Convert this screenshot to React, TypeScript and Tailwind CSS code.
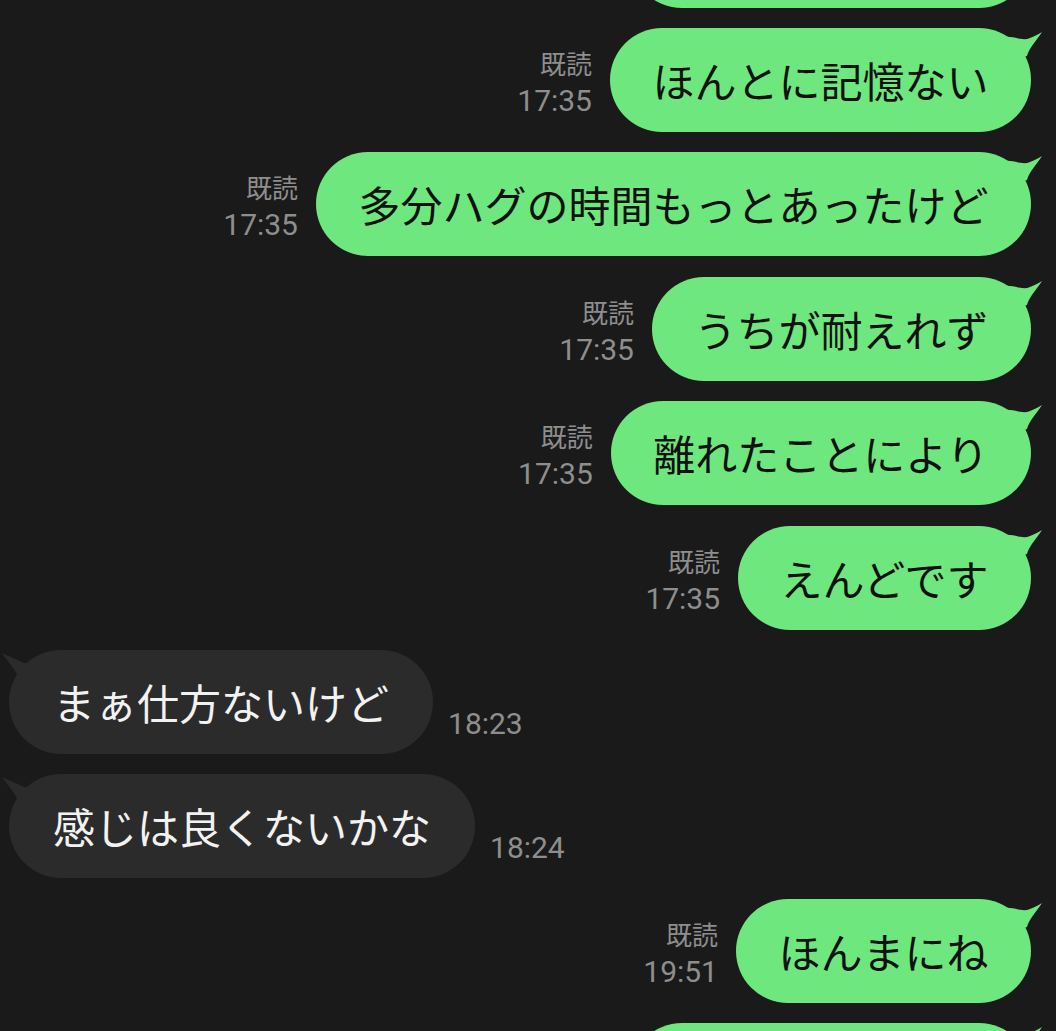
import React from "react";

type Msg = { side: "me" | "them"; text: string; time?: string; read?: boolean; w?: number };

const msgs: Msg[] = [
  { side: "me", text: "", w: 401 },
  { side: "me", text: "ほんとに記憶ない", time: "17:35", read: true },
  { side: "me", text: "多分ハグの時間もっとあったけど", time: "17:35", read: true },
  { side: "me", text: "うちが耐えれず", time: "17:35", read: true },
  { side: "me", text: "離れたことにより", time: "17:35", read: true },
  { side: "me", text: "えんどです", time: "17:35", read: true },
  { side: "them", text: "まぁ仕方ないけど", time: "18:23" },
  { side: "them", text: "感じは良くないかな", time: "18:24" },
  { side: "me", text: "ほんまにね", time: "19:51", read: true },
  { side: "me", text: "", w: 401 },
];

const jp = { fontFamily: '"Noto Sans CJK JP", "Noto Sans", sans-serif' };
const num = { fontFamily: 'Roboto, "Noto Sans CJK JP", sans-serif' };

function RightTail() {
  return (
    <svg className="absolute top-0 right-[-12px]" width="44" height="40" viewBox="0 0 44 40">
      <path d="M0 10 C 14 6, 22 14, 31 10 C 36 8, 40 6, 43 4 C 38 12, 30 20, 28 28 L 10 34 Z" fill="#6ee77e" />
    </svg>
  );
}

function LeftTail() {
  return (
    <svg className="absolute top-0 left-[-9px]" width="50" height="40" viewBox="0 0 50 40">
      <path d="M50 14 C 40 10, 30 16, 22 12 C 16 9, 8 6, 2 3 C 6 10, 18 20, 20 34 L 40 34 Z" fill="#2b2b2b" />
    </svg>
  );
}

export default function App() {
  return (
    <div className="w-[1056px] h-[1031px] overflow-hidden bg-[#1a1a1a]">
      <div className="flex flex-col gap-[20.4px] -mt-[96.4px] pl-[9px] pr-[25px]">
        {msgs.map((m, i) =>
          m.side === "me" ? (
            <div key={i} className="flex flex-row justify-end items-end gap-[18px]">
              {m.time && (
                <div className="flex flex-col items-end pb-[13px] text-[#8e8e8e]">
                  <span className="text-[26px] leading-[40px]" style={jp}>既読</span>
                  <span className="text-[30px] leading-[36px]" style={num}>{m.time}</span>
                </div>
              )}
              <div
                className="relative h-[104px] rounded-full bg-[#6ee77e] flex items-center px-[42.5px]"
                style={m.w ? { width: m.w } : undefined}
              >
                <RightTail />
                <span className="relative text-[42px] leading-none text-[#111111] whitespace-nowrap" style={jp}>
                  {m.text}
                </span>
              </div>
            </div>
          ) : (
            <div key={i} className="flex flex-row justify-start items-end gap-[15px]">
              <div className="relative h-[104px] rounded-full bg-[#2b2b2b] flex items-center px-[44px]">
                <LeftTail />
                <span className="relative text-[42px] leading-none text-[#f2f2f2] whitespace-nowrap" style={jp}>
                  {m.text}
                </span>
              </div>
              <span className="text-[30px] leading-[36px] pb-[12px] text-[#8e8e8e]" style={num}>
                {m.time}
              </span>
            </div>
          )
        )}
      </div>
    </div>
  );
}
